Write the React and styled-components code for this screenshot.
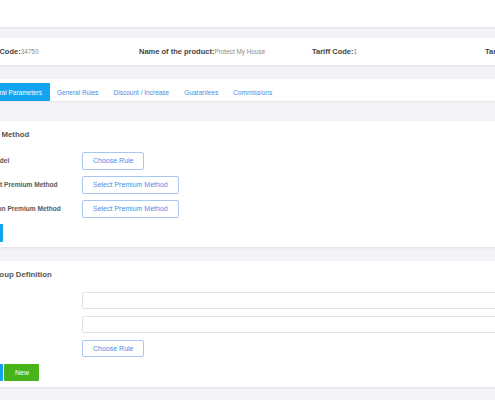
import React from "react";
import styled, { createGlobalStyle } from "styled-components";

const Global = createGlobalStyle`
  html, body { margin: 0; padding: 0; overflow: hidden; }
  body {
    background: #f3f3f7;
    font-family: "Liberation Sans", Arial, sans-serif;
  }
  #root { width: 100%; height: 400px; overflow: hidden; }
  * { box-sizing: border-box; }
`;

const Page = styled.div`
  width: 1040px;
  margin-left: -48px;
  display: flex;
  flex-direction: column;
`;

const Header = styled.header`
  height: 27px;
  background: #fff;
  box-shadow: 0 1px 2px rgba(0, 0, 0, 0.08);
`;

const InfoBar = styled.section`
  margin-top: 11px;
  height: 27px;
  background: #fff;
  box-shadow: 0 1px 2px rgba(0, 0, 0, 0.07);
  padding-left: 17px;
  display: grid;
  grid-template-columns: 170px repeat(5, 173px);
  align-items: center;
`;

const InfoItem = styled.div`
  white-space: nowrap;
  font-size: 6.4px;
  color: #8a8a8a;
`;

const InfoLabel = styled.span`
  font-size: 7.5px;
  font-weight: 700;
  color: #454545;
`;

const TabBar = styled.nav`
  margin-top: 14px;
  background: #fff;
  padding: 4px 0 0 24px;
  display: flex;
  border-bottom: 1px solid #e6e6ea;
`;

const Tab = styled.button`
  height: 18px;
  padding: 0 7.5px;
  border: none;
  border-radius: 0;
  font-family: inherit;
  font-size: 6.5px;
  white-space: nowrap;
  cursor: pointer;
  background: ${(p) => (p.$active ? "#14a3ee" : "transparent")};
  color: ${(p) => (p.$active ? "#fff" : "#3f8fe2")};
`;

const Card = styled.section`
  margin-top: ${(p) => p.$gap}px;
  background: #fff;
  box-shadow: 0 1px 2px rgba(0, 0, 0, 0.07);
  padding: 8px 14px 5.5px;
  display: flex;
  flex-direction: column;
  gap: 6.5px;
`;

const CardTitle = styled.h3`
  margin: 0 0 5.5px;
  font-size: 7.8px;
  line-height: 11px;
  font-weight: 700;
  color: #555;
  white-space: nowrap;
`;

const Row = styled.div`
  display: grid;
  grid-template-columns: 116px 1fr;
  align-items: center;
  min-height: 17.5px;
`;

const Label = styled.span`
  font-size: 6.6px;
  font-weight: 700;
  color: #595959;
  white-space: nowrap;
`;

const OutlineButton = styled.button`
  justify-self: start;
  height: 17.5px;
  padding: 0 10px;
  background: #fff;
  border: 1px solid #a6c7f3;
  border-radius: 2px;
  color: #4a8de8;
  font-family: inherit;
  font-size: 7px;
  white-space: nowrap;
  cursor: pointer;
`;

const TextInput = styled.input`
  width: 100%;
  height: 16.4px;
  border: 1px solid #e2e2e4;
  border-radius: 2px;
  background: #fff;
  outline: none;
`;

const Actions = styled.div`
  display: flex;
  gap: 1.5px;
  min-height: 17.5px;
`;

const SolidButton = styled.button`
  height: 17.5px;
  padding: 0 10.5px;
  border: none;
  border-radius: 1px;
  background: ${(p) => p.$color};
  color: #fff;
  font-family: inherit;
  font-size: 7px;
  white-space: nowrap;
  cursor: pointer;
`;

const tabs = [
  "General Parameters",
  "General Rules",
  "Discount / Increase",
  "Guarantees",
  "Commissions",
];

export default function App() {
  return (
    <>
      <Global />
      <Page>
        <Header />
        <InfoBar>
          <InfoItem>
            <InfoLabel>Product Code:</InfoLabel>34750
          </InfoItem>
          <InfoItem>
            <InfoLabel>Name of the product:</InfoLabel>Protect My House
          </InfoItem>
          <InfoItem>
            <InfoLabel>Tariff Code:</InfoLabel>1
          </InfoItem>
          <InfoItem>
            <InfoLabel>Tariff Name:</InfoLabel>Standard
          </InfoItem>
        </InfoBar>
        <TabBar>
          {tabs.map((t, i) => (
            <Tab key={t} $active={i === 0}>
              {t}
            </Tab>
          ))}
        </TabBar>
        <Card $gap={19}>
          <CardTitle>Premium Method</CardTitle>
          <Row>
            <Label>Pricing Model</Label>
            <OutlineButton>Choose Rule</OutlineButton>
          </Row>
          <Row>
            <Label>Adjustment Premium Method</Label>
            <OutlineButton>Select Premium Method</OutlineButton>
          </Row>
          <Row>
            <Label>Commission Premium Method</Label>
            <OutlineButton>Select Premium Method</OutlineButton>
          </Row>
          <Actions>
            <SolidButton $color="#12a2ee">Save</SolidButton>
          </Actions>
        </Card>
        <Card $gap={13.7}>
          <CardTitle>Cover Group Definition</CardTitle>
          <Row>
            <Label>Name</Label>
            <TextInput />
          </Row>
          <Row>
            <Label>Code</Label>
            <TextInput />
          </Row>
          <Row>
            <Label>Rule</Label>
            <OutlineButton>Choose Rule</OutlineButton>
          </Row>
          <Actions>
            <SolidButton $color="#12a2ee">Save</SolidButton>
            <SolidButton $color="#48b41c">New</SolidButton>
          </Actions>
        </Card>
      </Page>
    </>
  );
}
